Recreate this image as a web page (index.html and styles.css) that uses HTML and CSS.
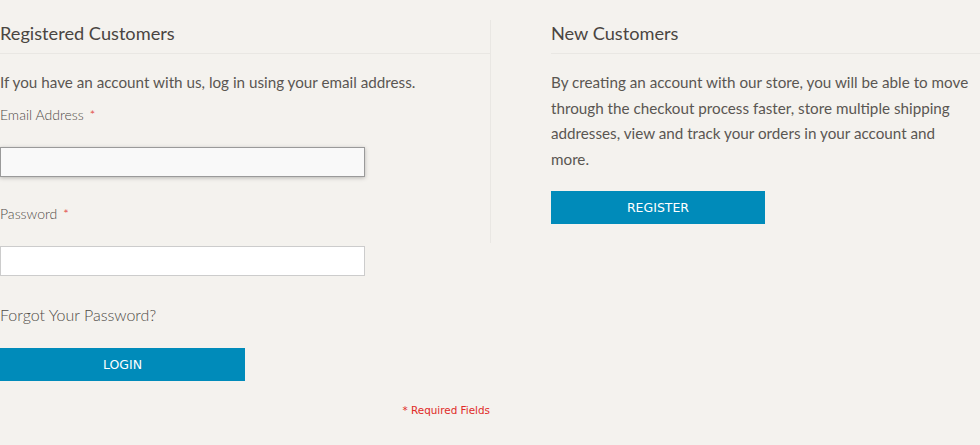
FILE: index.html
```html
<!DOCTYPE html>
<html>
<head>
<meta charset="utf-8">
<link rel="stylesheet" href="styles.css">
</head>
<body>
<div class="page">
  <section class="col col-login">
    <h2 class="block-title">Registered Customers</h2>
    <p class="intro">If you have an account with us, log in using your email address.</p>
    <div class="field">
      <label class="label">Email Address <span class="req">*</span></label>
      <input class="input input-focus" type="text">
    </div>
    <div class="field">
      <label class="label">Password <span class="req">*</span></label>
      <input class="input" type="password">
    </div>
    <a class="forgot">Forgot Your Password?</a>
    <button class="btn btn-login">LOGIN</button>
    <div class="required-note">* Required Fields</div>
  </section>
  <section class="col col-new">
    <h2 class="block-title">New Customers</h2>
    <p class="intro">By creating an account with our store, you will be able to move through the checkout process faster, store multiple shipping addresses, view and track your orders in your account and more.</p>
    <button class="btn btn-register">REGISTER</button>
  </section>
</div>
</body>
</html>
```
FILE: styles.css
```css
html, body {
  margin: 0;
  padding: 0;
  background: #f4f2ee;
}
body {
  font-family: Lato, "Liberation Sans", sans-serif;
  color: #555;
}
.page {
  display: flex;
  align-items: flex-start;
  padding-top: 20px;
}
.col-login {
  width: 490px;
  display: flex;
  flex-direction: column;
  align-items: flex-start;
}
.col-new {
  width: 420px;
  border-left: 1px solid #e9e7e3;
  padding-left: 60px;
  padding-right: 9px;
  padding-bottom: 19px;
}
.col-new .block-title {
  margin-right: -9px;
}
.block-title {
  margin: 0;
  font-size: 18.2px;
  line-height: 26px;
  font-weight: 400;
  color: #4a4541;
  padding-bottom: 7px;
  border-bottom: 1px solid #e9e7e3;
  align-self: stretch;
}
.intro {
  margin: 16px 0 0;
  font-size: 15.22px;
  line-height: 25.7px;
  font-weight: 400;
  color: #5a5652;
}
.field {
  display: flex;
  flex-direction: column;
  align-items: flex-start;
}
.label {
  font-size: 14px;
  line-height: 20px;
  font-weight: 300;
  color: #4f4b47;
  margin-top: 9px;
}
.field + .field .label {
  margin-top: 27px;
}
.req {
  color: #e02b27;
  margin-left: 2px;
}
.input {
  margin-top: 22px;
  width: 365px;
  height: 30px;
  box-sizing: border-box;
  border: 1px solid #ccc;
  background: #fff;
  padding: 0 8px;
  font-size: 14px;
  outline: none;
}
.input-focus {
  border-color: #9a9a9a;
  background: #f9f9f9;
  box-shadow: 0 1px 4px rgba(0,0,0,0.25);
}
.forgot {
  margin-top: 26px;
  font-size: 16px;
  line-height: 26px;
  font-weight: 300;
  color: #4f4b47;
}
.btn {
  border: 0;
  background: #008bba;
  color: #fff;
  font-family: "DejaVu Sans", Verdana, sans-serif;
  font-size: 12.5px;
  height: 33px;
  padding: 0;
  cursor: pointer;
}
.btn-login {
  margin-top: 20px;
  width: 245px;
}
.btn-register {
  margin-top: 18px;
  width: 214px;
}
.required-note {
  margin-top: 22px;
  align-self: flex-end;
  font-family: "DejaVu Sans", Verdana, sans-serif;
  font-size: 10.4px;
  line-height: 14px;
  color: #e02b27;
}
```
